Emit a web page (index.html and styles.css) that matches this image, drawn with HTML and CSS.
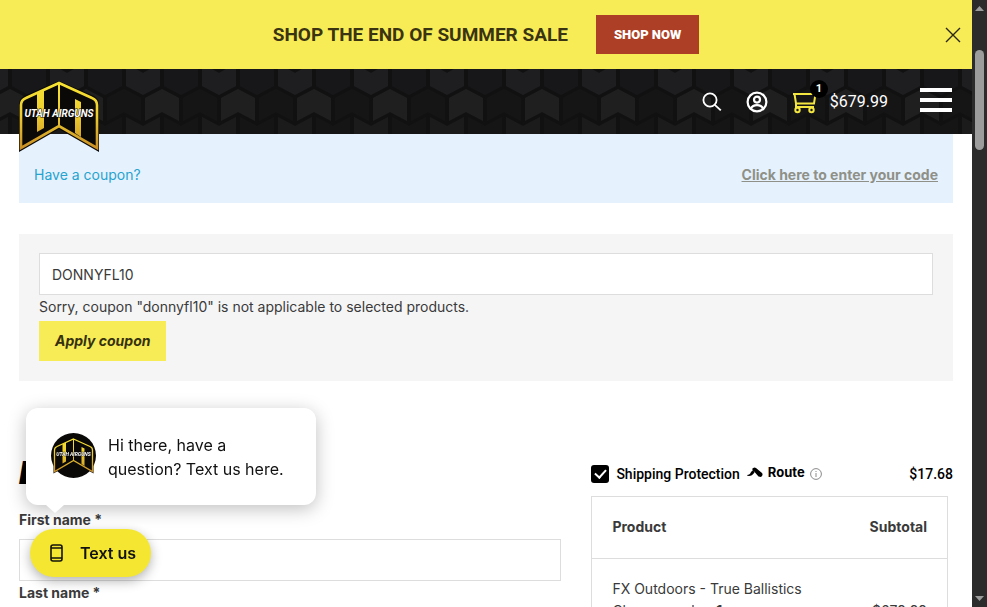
FILE: index.html
```html
<!DOCTYPE html>
<html lang="en">
<head>
  <meta charset="UTF-8">
  <meta name="viewport" content="width=device-width, initial-scale=1.0">
  <title>Checkout - Utah Airguns</title>
  <link rel="stylesheet" href="styles.css">
</head>
<body>
  <div class="page">
    <div class="promo">
      <span class="promo-text">SHOP THE END OF SUMMER SALE</span>
      <a href="#" class="promo-btn">SHOP NOW</a>
      <button class="promo-close" aria-label="Close">
        <svg width="16" height="16" viewBox="0 0 16 16"><path d="M1 1l14 14M15 1L1 15" stroke="#2b2712" stroke-width="1.4"/></svg>
      </button>
    </div>

    <header class="header">
      <svg class="header-bg" width="100%" height="65">
        <defs>
          <pattern id="hex" width="76" height="65" patternUnits="userSpaceOnUse" patternTransform="translate(48 0)">
            <rect width="76" height="65" fill="#111112"/>
            <path d="M2 0h34v17l-17 9-17-9z" fill="#1e1e20"/>
            <path d="M12 0l7 4 7-4z" fill="#111112"/>
            <path d="M40 0h34v17l-17 9-17-9z" fill="#17171a"/>
            <path d="M38 20l17 9v23l-17-9-17 9V29z" fill="#1f1f20"/>
            <path d="M0 20l17 9v23L0 43zM76 20l-17 9v23l17-9z" fill="#151516"/>
            <path d="M2 48l17 9 17-9v17H2z" fill="#1b1b1c"/>
            <path d="M40 48l17 9 17-9v17H40z" fill="#151516"/>
          </pattern>
        </defs>
        <rect width="100%" height="65" fill="url(#hex)"/>
      </svg>

      <a href="#" class="logo" aria-label="Utah Airguns">
        <svg width="80" height="71" viewBox="0 0 80 71">
          <defs>
            <linearGradient id="gold" gradientUnits="userSpaceOnUse" x1="0" y1="0" x2="0" y2="70">
              <stop offset="0" stop-color="#f8e534"/>
              <stop offset="0.5" stop-color="#edcb2e"/>
              <stop offset="1" stop-color="#c68a25"/>
            </linearGradient>
            <g id="mark">
              <path d="M40 0L75 15Q80 18 80 24V71L40 48 0 71V24Q0 18 5 15Z" fill="#0b0908"/>
              <path d="M40 2L73 17Q78 19 78 24V67L40 45 2 67V24Q2 19 7 17Z" fill="none" stroke="url(#gold)" stroke-width="2.600"/>
              <path d="M39 2h2v44h-2zM18 12l7-3v38l-7 4zM56 18l6 3v35l-6-4z" fill="url(#gold)"/>
            </g>
          </defs>
          <use href="#mark"/>
          <text x="40" y="36" class="logo-text">UTAH AIRGUNS</text>
        </svg>
      </a>

      <nav class="tools">
        <button class="tool" aria-label="Search">
          <svg width="20" height="20" viewBox="0 0 20 20" fill="none" stroke="#fff" stroke-width="1.8"><circle cx="8" cy="8" r="6.6"/><path d="M12.8 12.8l6 5.6"/></svg>
        </button>
        <a href="#" class="tool" aria-label="My account">
          <svg width="22" height="22" viewBox="0 0 22 22" fill="none" stroke="#fff" stroke-width="2.2"><circle cx="11" cy="11" r="9.4"/><circle cx="11" cy="8.6" r="3"/><path d="M5 17.6q1.5-3.4 6-3.4t6 3.4"/></svg>
        </a>
        <a href="#" class="cart">
          <svg width="26" height="24" viewBox="0 0 26 24" fill="none" stroke="#f3e640" stroke-width="2"><path d="M1 4h22.500l-1.500 9.500H4L2.500 4M4 13.500V17h18"/><circle cx="5.500" cy="20" r="2.200"/><circle cx="19.500" cy="20" r="2.200"/></svg>
          <span class="cart-count">1</span>
          <span class="cart-total">$679.99</span>
        </a>
        <button class="menu" aria-label="Menu"><i></i><i></i><i></i></button>
      </nav>
    </header>

    <main class="content">
      <div class="coupon-bar">
        <span>Have a coupon?</span>
        <a href="#">Click here to enter your code</a>
      </div>

      <form class="coupon-form">
        <input type="text" class="field" value="DONNYFL10" aria-label="Coupon code">
        <p>Sorry, coupon "donnyfl10" is not applicable to selected products.</p>
        <button type="button" class="apply">Apply coupon</button>
      </form>

      <div class="checkout">
        <section class="billing">
          <h2>Billing</h2>
          <label for="first">First name *</label>
          <input type="text" class="field" id="first">
          <label for="last">Last name *</label>
          <input type="text" class="field" id="last">
        </section>

        <section class="order">
          <div class="protection">
            <input type="checkbox" id="protect" checked>
            <label for="protect">Shipping Protection</label>
            <span class="route">
              <svg width="16" height="10" viewBox="0 0 16 10"><path d="M0 8Q3 8 4 5L6 3 7.500 5.500Q5 9 2 9Q0 9 0 8ZM5 2Q7-0.500 9 1L15 6Q16.500 8 14 10L11.500 9.500Z" fill="#000"/></svg>
              Route
            </span>
            <svg width="12" height="12" viewBox="0 0 12 12" fill="none" stroke="#8a8a8a"><circle cx="6" cy="6" r="5.400"/><path d="M6 5v4M6 3v1"/></svg>
            <span class="price">$17.68</span>
          </div>
          <table class="items">
            <thead>
              <tr><th>Product</th><th>Subtotal</th></tr>
            </thead>
            <tbody>
              <tr><td>FX Outdoors - True Ballistics Chronograph <b>× 1</b></td><td>$679.99</td></tr>
            </tbody>
          </table>
        </section>
      </div>
    </main>
  </div>

  <div class="scrollbar">
    <svg width="9" height="5" viewBox="0 0 9 5"><path d="M4.500 0L9 5H0z" fill="#9c9c9c"/></svg>
    <div class="thumb"></div>
    <svg class="down" width="9" height="5" viewBox="0 0 9 5"><path d="M0 0h9L4.500 5z" fill="#9c9c9c"/></svg>
  </div>

  <div class="chat">
    <div class="bubble">
      <svg class="avatar" width="45" height="45" viewBox="0 0 90 90">
        <circle cx="45" cy="45" r="45" fill="#0b0908"/>
        <use href="#mark" x="5" y="10"/>
        <text x="45" y="46" class="logo-text">UTAH AIRGUNS</text>
      </svg>
      <p>Hi there, have a question? Text us here.</p>
    </div>
    <button class="text-us">
      <svg width="13" height="18" viewBox="0 0 13 18" fill="none" stroke="#15140a" stroke-width="1.600"><rect x="1" y="1" width="11" height="16" rx="2"/><path d="M1 4h11M1 14h11"/></svg>
      Text us
    </button>
  </div>
</body>
</html>
```
FILE: styles.css
```css
* {
  margin: 0;
  padding: 0;
  box-sizing: border-box;
}
body {
  display: flex;
  height: 100vh;
  overflow: hidden;
  background: #fff;
  color: #3a3a3a;
  font-family: Inter, Roboto, sans-serif;
  font-size: 14px;
  line-height: 24px;
}
button, input {
  font: inherit;
  color: inherit;
}
button {
  border: none;
  background: none;
  cursor: pointer;
}
svg {
  display: block;
}
.page {
  flex: 1;
  min-width: 0;
}

/* promo */
.promo {
  position: relative;
  display: flex;
  align-items: center;
  justify-content: center;
  gap: 28px;
  height: 69px;
  background: #f8ec56;
  font-family: Roboto, sans-serif;
}
.promo-text {
  color: #3a3413;
  font-size: 19px;
  font-weight: 700;
}
.promo-btn {
  padding: 8px 18px;
  background: #ad3f26;
  color: #fff;
  font-size: 13px;
  font-weight: 900;
  line-height: 23px;
  text-decoration: none;
}
.promo-close {
  position: absolute;
  right: 11px;
  top: 27px;
}

/* header */
.header {
  position: relative;
  z-index: 2;
  display: flex;
  align-items: center;
  justify-content: space-between;
  height: 65px;
  padding: 0 20px 0 19px;
  background: #111112;
}
.header-bg {
  position: absolute;
  inset: 0;
}
.logo {
  position: relative;
  align-self: flex-start;
  padding-top: 12px;
}
.logo-text {
  fill: #fff;
  stroke: #0b0908;
  stroke-width: 1px;
  paint-order: stroke;
  font: italic 700 10px Roboto, sans-serif;
  text-anchor: middle;
}
.tools {
  position: relative;
  display: flex;
  align-items: center;
  gap: 24px;
  color: #fff;
}
.cart {
  position: relative;
  display: flex;
  align-items: center;
  gap: 12px;
  margin-right: 8px;
  color: #fff;
  font-family: Roboto, sans-serif;
  font-size: 16px;
  text-decoration: none;
}
.cart-count {
  position: absolute;
  left: 18px;
  top: -10px;
  width: 18px;
  height: 18px;
  border-radius: 50%;
  background: #000;
  font-size: 11px;
  font-weight: 700;
  line-height: 18px;
  text-align: center;
}
.menu {
  display: flex;
  flex-direction: column;
  gap: 6px;
  margin-top: -4px;
}
.menu i {
  width: 32px;
  height: 4px;
  background: #fff;
}

/* coupon */
.content {
  padding: 0 19px;
}
.coupon-bar {
  display: flex;
  justify-content: space-between;
  padding: 29px 15px 16px;
  background: #e5f2fd;
  color: #27a3cf;
}
.coupon-bar a {
  color: #8f9088;
  font-weight: 700;
}
.coupon-form {
  margin-top: 31px;
  padding: 19px 20px 20px;
  background: #f5f5f6;
}
.field {
  display: block;
  width: 100%;
  height: 42px;
  padding: 0 12px;
  border: 1px solid #ddd;
  background: #fff;
}
.coupon-form p {
  margin-bottom: 2px;
}
.apply {
  padding: 8px 16px;
  background: #f8ec56;
  color: #35310f;
  font-style: italic;
  font-weight: 700;
}

/* checkout */
.checkout {
  display: grid;
  grid-template-columns: 3fr 2fr;
  gap: 30px;
  margin-top: 72px;
}
.billing h2 {
  margin-bottom: 15px;
  color: #000;
  font-size: 32px;
  font-style: italic;
  font-weight: 900;
  line-height: 40px;
}
.billing label {
  display: block;
  font-weight: 700;
}
.billing label + .field {
  margin-top: 7px;
}
.protection {
  display: flex;
  align-items: center;
  gap: 5px;
  margin: 7px 0 8px;
  color: #000;
  font-family: Roboto, sans-serif;
  font-size: 14px;
  font-weight: 500;
}
.protection input {
  appearance: none;
  display: grid;
  place-items: center;
  width: 18px;
  height: 18px;
  margin-right: 2px;
  border-radius: 3px;
  background: #000;
}
.protection input::before {
  content: "";
  width: 9px;
  height: 5px;
  margin-bottom: 3px;
  border: solid #fff;
  border-width: 0 0 2px 2px;
  transform: rotate(-48deg);
}
.route {
  display: flex;
  align-items: center;
  gap: 5px;
  padding: 0 0 4px 2px;
  font-family: Inter, sans-serif;
  font-size: 13px;
  font-weight: 700;
}
.price {
  margin-left: auto;
}
.items {
  width: calc(100% - 5px);
  border: 1px solid #ddd;
  border-collapse: collapse;
  line-height: 22px;
}
.items tr {
  border-bottom: 1px solid #ddd;
}
.items th, .items td {
  padding: 19px 20px 20px;
  text-align: left;
}
.items td {
  vertical-align: bottom;
}
.items th:last-child, .items td:last-child {
  text-align: right;
}

/* scrollbar */
.scrollbar {
  display: flex;
  flex-direction: column;
  align-items: center;
  width: 15px;
  padding: 6px 0;
  background: #2b2b2b;
}
.thumb {
  width: 9px;
  height: 100px;
  margin-top: 39px;
  border-radius: 5px;
  background: #9c9c9c;
}
.down {
  margin-top: auto;
}

/* chat */
.chat {
  position: fixed;
  left: 26px;
  bottom: 30px;
  z-index: 5;
  color: #111;
}
.bubble {
  position: relative;
  display: flex;
  align-items: flex-start;
  gap: 12px;
  width: 290px;
  padding: 25px 25px 24px;
  border-radius: 12px;
  background: #fff;
  box-shadow: 0 4px 18px rgba(0, 0, 0, 0.25);
}
.bubble::after {
  content: "";
  position: absolute;
  left: 20px;
  top: 100%;
  border: solid transparent;
  border-width: 8px 9px 0;
  border-top-color: #fff;
}
.bubble p {
  flex: 1;
  font-size: 16px;
}
.avatar {
  flex: none;
}
.text-us {
  display: flex;
  align-items: center;
  gap: 17px;
  margin: 24px 0 0 4px;
  padding: 12px 15px 12px 20px;
  border-radius: 24px;
  background: #f5e731;
  box-shadow: 0 4px 12px rgba(0, 0, 0, 0.3);
  font-size: 16px;
  font-weight: 600;
}
```
